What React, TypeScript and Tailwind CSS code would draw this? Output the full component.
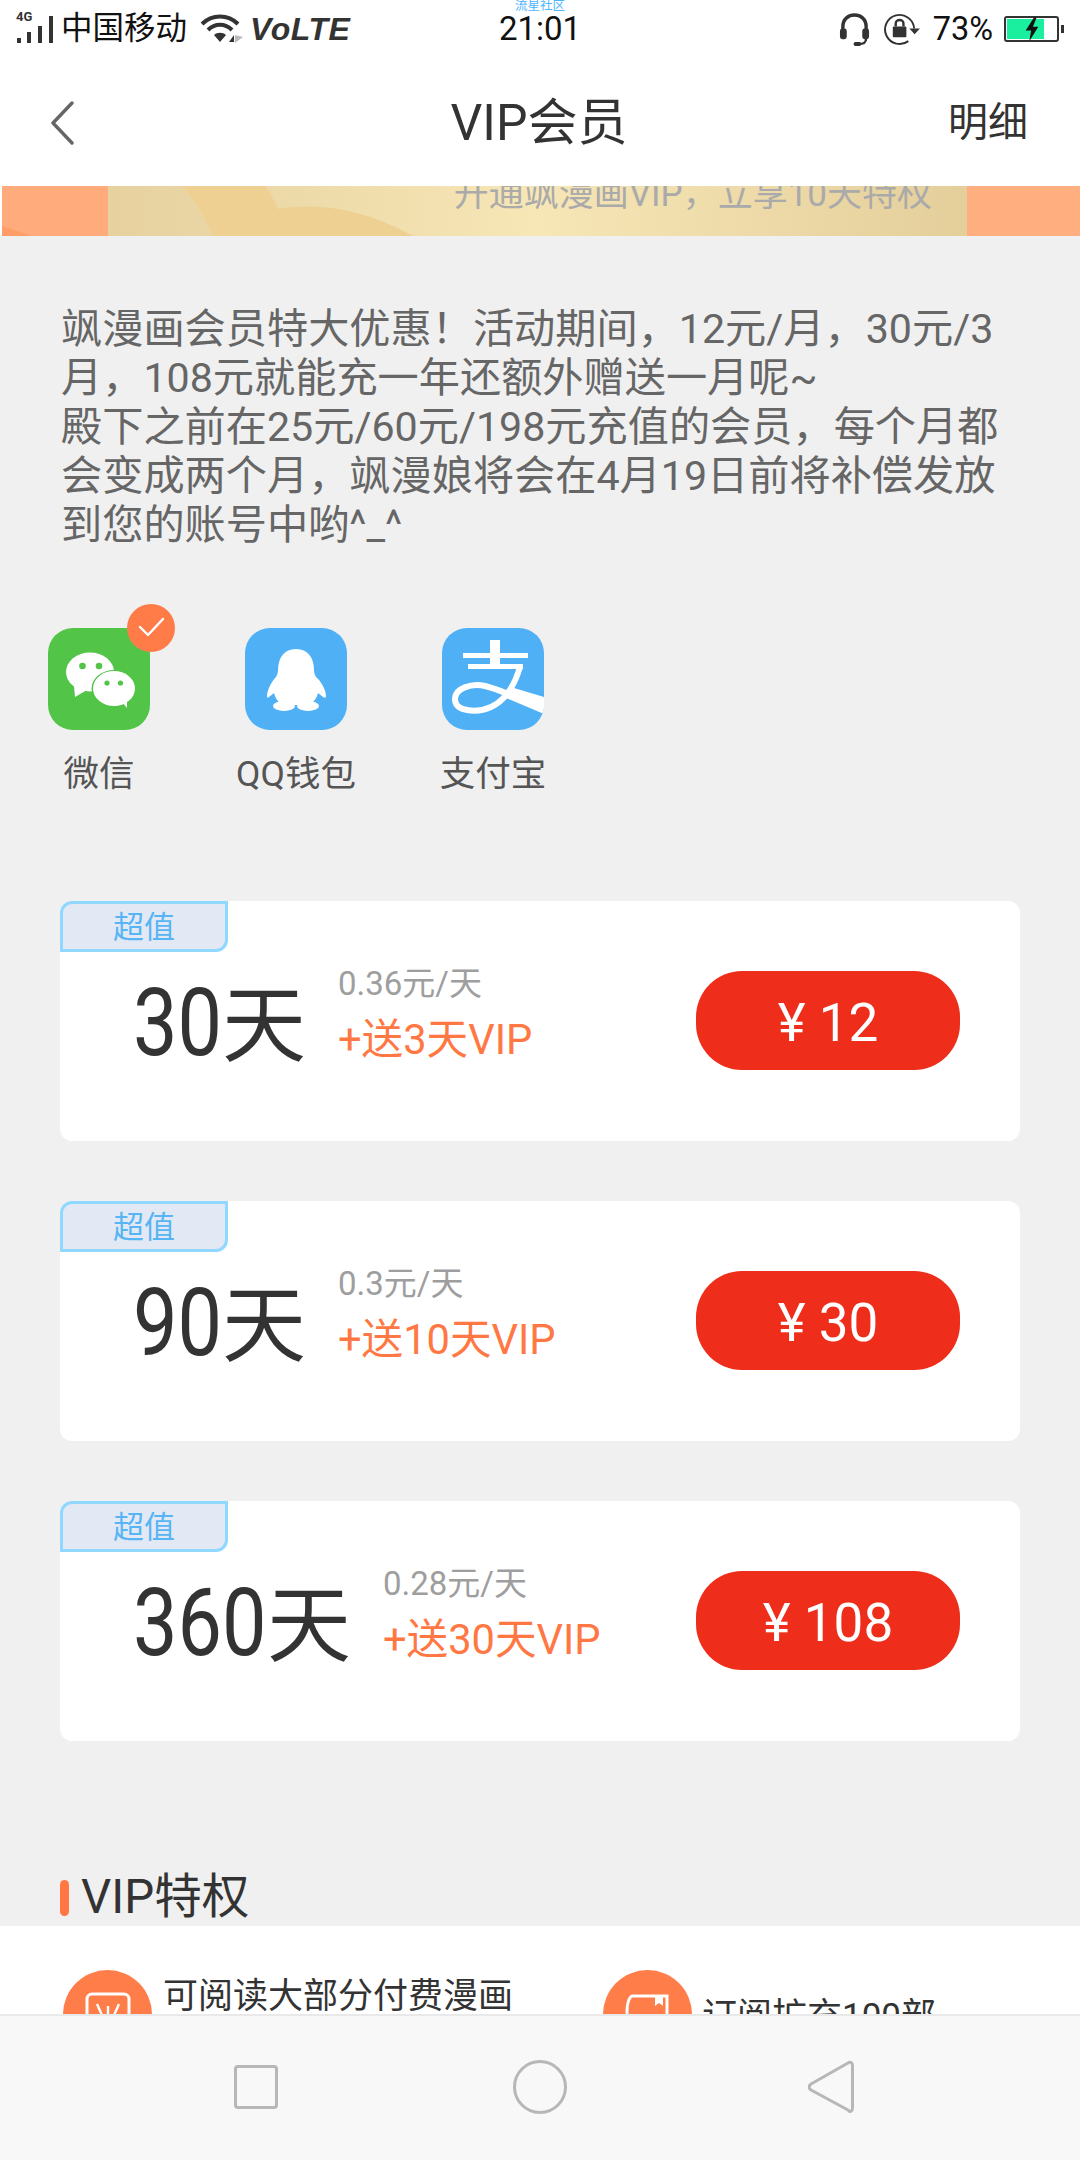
import React from "react";

const plans = [
  { days: "30", numW: "w-[89px]", per: "0.36元/天", bonus: "+送3天VIP", price: "12" },
  { days: "90", numW: "w-[89px]", per: "0.3元/天", bonus: "+送10天VIP", price: "30" },
  { days: "360", numW: "w-[134px]", per: "0.28元/天", bonus: "+送30天VIP", price: "108" },
];

function Signal() {
  return (
    <div className="relative w-[40px] h-[32px] shrink-0">
      <span className="absolute left-0 -top-[3px] text-[13px] leading-[13px] font-bold text-[#333]">4G</span>
      <svg viewBox="0 0 40 32" className="absolute inset-0 w-[40px] h-[32px]" fill="#333">
        <rect x="1" y="25" width="4" height="5" />
        <rect x="11" y="19" width="4" height="11" />
        <rect x="22" y="13" width="4" height="17" />
        <rect x="33" y="3" width="4" height="27" />
      </svg>
    </div>
  );
}

function Wifi() {
  return (
    <svg viewBox="0 0 44 32" className="w-[44px] h-[32px] shrink-0" fill="none">
      <path d="M2 11 C12 1 28 1 38 11" stroke="#333" strokeWidth="4" />
      <path d="M8 17 C15 10 25 10 32 17" stroke="#333" strokeWidth="4" />
      <path d="M14 22 C17 19 23 19 26 22 L20 29 Z" fill="#333" />
      <path d="M29 29 L34 22 L34 29 Z" fill="#333" />
      <path d="M35 22 L43 24 L35 30 Z" fill="#bbb" />
    </svg>
  );
}

function Headset() {
  return (
    <svg viewBox="0 0 32 36" className="w-[31px] h-[35px] shrink-0" fill="none">
      <path d="M4 20 V15 C4 -1 28 -1 28 15 V20" stroke="#333" strokeWidth="3.5" />
      <rect x="1" y="17" width="7" height="11" rx="2.5" fill="#333" />
      <rect x="24" y="17" width="7" height="11" rx="2.5" fill="#333" />
      <path d="M28 27 C28 32 25 33 20 33" stroke="#333" strokeWidth="2.5" />
      <rect x="15" y="31" width="8" height="4" rx="2" fill="#333" />
    </svg>
  );
}

function RotateLock() {
  return (
    <svg viewBox="0 0 38 34" className="w-[37px] h-[33px] shrink-0" fill="none">
      <path d="M31 16 A15 15 0 1 0 25 29" stroke="#333" strokeWidth="2" />
      <path d="M26 16 H37 L31.5 22 Z" fill="#333" />
      <rect x="9" y="14" width="14" height="11" rx="1" fill="#333" />
      <path d="M12 14 V11 C12 6 20 6 20 11 V14" stroke="#333" strokeWidth="2.5" />
    </svg>
  );
}

function Battery() {
  return (
    <div className="flex items-center shrink-0">
      <div className="relative w-[55px] h-[26px] rounded-[3px] border-2 border-[#333] p-[1px]">
        <div className="w-[37px] h-full bg-[#19ef9f]" />
        <svg viewBox="0 0 20 26" className="absolute left-[17px] -top-[1px] w-[18px] h-[25px]" fill="#111">
          <path d="M12 0 L3 14 H9 L7 26 L17 10 H11 L15 0 Z" />
        </svg>
      </div>
      <div className="w-[3px] h-[8px] ml-[2px] bg-[#333]" />
    </div>
  );
}

function WeChat() {
  return (
    <div className="relative w-[102px] h-[102px]">
      <svg viewBox="0 0 102 102" className="w-[102px] h-[102px]">
        <rect width="102" height="102" rx="25" fill="#52c447" />
        <ellipse cx="42" cy="44" rx="24" ry="19.5" fill="#fff" />
        <path d="M26 58 L27 69 L39 62 Z" fill="#fff" />
        <ellipse cx="66" cy="60.5" rx="22.5" ry="18.5" fill="#52c447" />
        <ellipse cx="66" cy="60.5" rx="21" ry="17.5" fill="#fff" />
        <path d="M74 74 L79 80 L79 70 Z" fill="#fff" />
        <circle cx="34.5" cy="38" r="3.3" fill="#52c447" />
        <circle cx="51" cy="38" r="3.3" fill="#52c447" />
        <circle cx="59" cy="55" r="2.6" fill="#52c447" />
        <circle cx="72.5" cy="55" r="2.6" fill="#52c447" />
      </svg>
      <div className="absolute -right-[25px] -top-[24px] w-[48px] h-[48px] rounded-full bg-[#ff7c49] flex items-center justify-center">
        <svg viewBox="0 0 48 48" className="w-[48px] h-[48px]" fill="none">
          <path d="M13 23 L21 31 L36 15" stroke="#fff" strokeWidth="2.4" strokeLinecap="round" strokeLinejoin="round" />
        </svg>
      </div>
    </div>
  );
}

function QQ() {
  return (
    <svg viewBox="0 0 102 102" className="w-[102px] h-[102px]">
      <rect width="102" height="102" rx="25" fill="#4fb0f5" />
      <path
        d="M51 21 C39 21 33 30 33 42 C33 45 32 47 31 49 C27 53 22 62 22 68 C22 70 23 70 24 69 L29 65 C30 70 33 74 37 77 L64 77 C69 74 72 70 73 65 L78 69 C80 70 81 70 81 68 C81 62 76 53 71 49 C70 47 69 45 69 42 C69 30 63 21 51 21 Z"
        fill="#fff"
      />
      <ellipse cx="39" cy="78" rx="11" ry="5" fill="#fff" />
      <ellipse cx="63" cy="78" rx="11" ry="5" fill="#fff" />
    </svg>
  );
}

function Alipay() {
  return (
    <svg viewBox="0 0 102 102" className="w-[102px] h-[102px]">
      <defs>
        <clipPath id="ali">
          <rect width="102" height="102" rx="25" />
        </clipPath>
      </defs>
      <g clipPath="url(#ali)">
        <rect width="102" height="102" fill="#4fb0f5" />
        <rect x="48" y="12" width="10" height="26" fill="#fff" />
        <rect x="21" y="25" width="65" height="5" fill="#fff" />
        <rect x="26" y="36" width="55" height="5" fill="#fff" />
        <path
          d="M78 39 C73 56 64 72 49 79 C36 85 14 84 13 72 C12 60 30 55 43 58 C57 61 70 68 102 81"
          fill="none"
          stroke="#fff"
          strokeWidth="6"
        />
        <path d="M72 60 L102 69 L102 86 L64 70 Z" fill="#fff" />
      </g>
    </svg>
  );
}

function Card({ p }: { p: (typeof plans)[number] }) {
  return (
    <div className="bg-white rounded-[12px] h-[240px] flex flex-col">
      <div className="w-[168px] h-[51px] border-[3px] border-[#90d8ff] bg-[#e2e9f4] rounded-tl-[12px] rounded-br-[12px] flex items-center justify-center text-[31px] leading-none text-[#57b5f5] pt-[1px]">
        超值
      </div>
      <div className="mt-[19px] h-[99px] flex items-center justify-between pl-[73px] pr-[60px]">
        <div className="flex items-start">
          <div className="flex items-baseline text-[#333] mt-[9px]">
            <span className={`inline-block ${p.numW} text-[94px] leading-[88px] origin-left scale-x-[0.843]`}>{p.days}</span>
            <span className="text-[84px] leading-[88px]">天</span>
          </div>
          <div className="ml-[32px] flex flex-col -mt-[6px]">
            <span className="text-[33px] leading-[40px] text-[#9e9e9e]">{p.per}</span>
            <span className="mt-[11px] text-[41.6px] leading-[50px] text-[#ff7843]">{p.bonus}</span>
          </div>
        </div>
        <div className="w-[264px] h-[99px] rounded-[46px] bg-[#ee2d1b] flex items-center justify-center text-white text-[53px] leading-none pt-[5px]">
          ¥ {p.price}
        </div>
      </div>
    </div>
  );
}

export default function App() {
  return (
    <div className="w-[1080px] h-[2160px] overflow-hidden flex flex-col bg-[#f0f0f0] [font-family:Roboto,'Noto_Sans_CJK_SC',sans-serif]">
      {/* status bar */}
      <div className="h-[60px] bg-white shrink-0 grid grid-cols-[1fr_auto_1fr] items-start pl-[16px] pr-[16px]">
        <div className="flex items-center h-[56px] pt-[1px]">
          <Signal />
          <span className="ml-[5px] text-[31.5px] leading-none text-[#111]">中国移动</span>
          <span className="ml-[13px] flex"><Wifi /></span>
          <span className="ml-[6px] text-[32px] leading-none font-bold italic tracking-[0.5px] text-[#333] [font-family:'Liberation_Sans',sans-serif]">VoLTE</span>
        </div>
        <div className="flex flex-col items-center">
          <span className="text-[12.5px] leading-[12px] text-[#4db4ff]">流星社区</span>
          <span className="text-[33px] leading-[33px] text-[#111]">21:01</span>
        </div>
        <div className="flex items-center justify-end h-[56px] pt-[2px]">
          <Headset />
          <span className="ml-[14px] flex"><RotateLock /></span>
          <span className="ml-[12px] text-[32.5px] leading-none text-[#111]">73%</span>
          <span className="ml-[11px] flex"><Battery /></span>
        </div>
      </div>

      {/* header */}
      <div className="h-[126px] bg-white shrink-0 grid grid-cols-[1fr_auto_1fr] items-center pl-[50px] pr-[52px]">
        <svg viewBox="0 0 26 44" className="w-[26px] h-[44px]" fill="none">
          <path d="M22 2 L3 22 L22 42" stroke="#666" strokeWidth="3.4" strokeLinecap="round" strokeLinejoin="round" />
        </svg>
        <span className="text-[50px] leading-none text-[#333]">VIP会员</span>
        <span className="justify-self-end text-[40px] leading-none text-[#333]">明细</span>
      </div>

      {/* scrolling content */}
      <div className="flex-1 min-h-0 overflow-hidden flex flex-col">
        <div className="h-[50px] shrink-0 flex bg-white pl-[2px] overflow-hidden">
          <div className="w-[106px] bg-[#ffab7c] flex items-end">
            <svg viewBox="0 0 30 10" className="w-[30px] h-[10px]">
              <path d="M0 0 L30 10 H0 Z" fill="#ff9d68" />
            </svg>
          </div>
          <div className="relative flex-1 overflow-hidden flex justify-end pr-[35px] bg-gradient-to-r from-[#e6d19f] via-[#f7e6b6] to-[#e4cf9b]">
            <svg viewBox="0 0 859 50" className="absolute inset-0 w-[859px] h-[50px]" preserveAspectRatio="none">
              <path d="M74 0 C88 16 98 32 104 50 L305 50 C270 30 220 14 170 23 C166 14 162 6 157 0 Z" fill="#eed092" />
            </svg>
            <span className="relative -mt-[9px] text-[35px] leading-[36px] h-[36px] text-[#aaa] whitespace-nowrap">开通飒漫画VIP，立享10天特权</span>
          </div>
          <div className="w-[113px] bg-[#ffae7f]" />
        </div>

        <p className="pt-[69px] pl-[61px] text-[41.2px] leading-[49px] text-[#666] whitespace-nowrap">
          飒漫画会员特大优惠！活动期间，12元/月，30元/3
          <br />
          月，108元就能充一年还额外赠送一月呢~
          <br />
          殿下之前在25元/60元/198元充值的会员，每个月都
          <br />
          会变成两个月，飒漫娘将会在4月19日前将补偿发放
          <br />
          到您的账号中哟^_^
        </p>

        <div className="mt-[78px] pl-[29px] flex gap-[57px]">
          {[
            { n: "微信", i: <WeChat /> },
            { n: "QQ钱包", i: <QQ /> },
            { n: "支付宝", i: <Alipay /> },
          ].map((x) => (
            <div key={x.n} className="w-[140px] flex flex-col items-center">
              {x.i}
              <span className="mt-[24px] text-[35.5px] leading-[40px] text-[#555] whitespace-nowrap">{x.n}</span>
            </div>
          ))}
        </div>

        <div className="mt-[107px] mx-[60px] flex flex-col gap-[60px]">
          {plans.map((p) => (
            <Card key={p.days} p={p} />
          ))}
        </div>

        <div className="mt-[129px] h-[56px] pl-[60px] flex items-center shrink-0">
          <div className="w-[9px] h-[36px] rounded-full bg-[#ff7843]" />
          <span className="ml-[12px] text-[47.5px] leading-none text-[#333]">VIP特权</span>
        </div>

        <div className="flex-1 bg-white pt-[44px] flex">
          <div className="w-[540px] pl-[63px] flex items-start shrink-0">
            <div className="w-[89px] h-[89px] rounded-full bg-[#ff7d49] shrink-0 flex items-start justify-center pt-[22px]">
              <svg viewBox="0 0 46 46" className="w-[46px] h-[46px]" fill="none">
                <rect x="2" y="2" width="42" height="42" rx="5" stroke="#fff" strokeWidth="3" />
                <path d="M12 12 L21 32 M34 12 L25 32 M23 14 V32 M4 24 L16 32 M42 24 L30 32" stroke="#fff" strokeWidth="2.4" />
              </svg>
            </div>
            <span className="ml-[11px] mt-[7px] text-[35px] leading-[40px] text-[#333] whitespace-nowrap">可阅读大部分付费漫画</span>
          </div>
          <div className="flex items-start">
            <div className="ml-[63px] w-[89px] h-[89px] rounded-full bg-[#ff7d49] shrink-0 flex items-start justify-center pt-[24px]">
              <svg viewBox="0 0 46 34" className="w-[46px] h-[34px]" fill="none">
                <path d="M8 2 H42 V26 C42 29 40 32 38 32 H8 C4 32 2 24 2 17 C2 10 4 2 8 2 Z" stroke="#fff" strokeWidth="3" />
                <path d="M30 2 H38 V12 L34 9 L30 12 Z" fill="#fff" />
              </svg>
            </div>
            <span className="ml-[10px] mt-[27px] text-[35px] leading-[40px] text-[#333] whitespace-nowrap">订阅扩充100部</span>
          </div>
        </div>
      </div>

      {/* bottom nav */}
      <div className="h-[146px] shrink-0 bg-[#f8f8f8] border-t-2 border-[#e9e9e9] flex items-center pl-[234px] pb-[2px]">
        <div className="w-[44px] h-[44px] rounded-[4px] border-[3px] border-[#b7b7b7]" />
        <div className="ml-[235px] w-[54px] h-[54px] rounded-full border-[3px] border-[#b7b7b7]" />
        <svg viewBox="0 0 46 54" className="ml-[241px] w-[46px] h-[54px]" fill="none">
          <path d="M40 3 C43 1 44.5 3 44.5 6 V48 C44.5 51 42 53 40 50 L3 30 C0.5 28 0.5 26 3 24 Z" stroke="#b7b7b7" strokeWidth="3" strokeLinejoin="round" />
        </svg>
      </div>
    </div>
  );
}
